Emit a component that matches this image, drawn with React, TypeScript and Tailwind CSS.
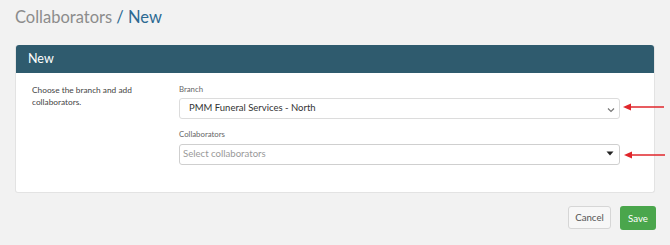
import React from "react";

function Arrow() {
  return (
    <svg width="42" height="8" viewBox="0 0 42 8" className="block">
      <line x1="6" y1="4" x2="41" y2="4" stroke="#e0262b" strokeWidth="1.6" />
      <polygon points="0,4 8,0.5 8,7.5" fill="#e0262b" />
    </svg>
  );
}

export default function App() {
  return (
    <div className="w-[670px] h-[245px] bg-[#f2f2f2] overflow-hidden" style={{ fontFamily: 'Lato, "Noto Sans", sans-serif' }}>
      <div className="pl-[15px] pt-[5px] h-[45px] text-[16.5px] leading-[24px]">
        <span className="text-[#8c8c8c]">Collaborators</span>
        <span className="text-[#2d6a92]"> / New</span>
      </div>
      <div className="ml-[15px] w-[640px] bg-white rounded-[3px] border border-[#e3e3e3] border-t-0">
        <div className="h-[28px] bg-[#2f5b6e] rounded-t-[3px] pl-[12px] text-white text-[12.5px] leading-[28px]">New</div>
        <div className="flex pt-[9px] pb-[27px]">
          <div className="w-[163px] pl-[16px] pt-[2px] text-[8.3px] leading-[12px] text-[#444]">
            Choose the branch and add collaborators.
          </div>
          <div className="w-[441px] relative">
            <div className="text-[7.8px] leading-[15px] text-[#666] mb-[1px]">Branch</div>
            <div className="relative h-[21px] border border-[#dcdcdc] rounded-[3px] flex items-center pl-[9px] text-[9.5px] text-[#333]">
              PMM Funeral Services - North
              <svg width="8" height="6" viewBox="0 0 8 6" className="absolute right-[4px] top-[8px]">
                <polyline points="1,1.5 4,4.5 7,1.5" fill="none" stroke="#777" strokeWidth="1.2" />
              </svg>
              <div className="absolute left-[443px] top-[4px]"><Arrow /></div>
            </div>
            <div className="text-[7.8px] leading-[15px] text-[#666] mt-[8px] mb-[2px]">Collaborators</div>
            <div className="relative h-[21px] border border-[#cfcfcf] rounded-[3px] flex items-center pl-[3px] text-[9.6px] text-[#999]">
              Select collaborators
              <svg width="8" height="5" viewBox="0 0 8 5" className="absolute right-[5px] top-[6px]">
                <polygon points="0.5,0.5 7.5,0.5 4,4.5" fill="#222" />
              </svg>
              <div className="absolute left-[444px] top-[6px]"><Arrow /></div>
            </div>
          </div>
        </div>
      </div>
      <div className="flex justify-end gap-[9px] pr-[14px] mt-[13px]">
        <button className="h-[23px] w-[43px] bg-[#f7f7f7] border border-[#d6d6d6] rounded-[3px] text-[9.7px] text-[#555]">Cancel</button>
        <button className="h-[24px] w-[36px] bg-[#4aa64c] rounded-[3px] text-[9.7px] text-white">Save</button>
      </div>
    </div>
  );
}
